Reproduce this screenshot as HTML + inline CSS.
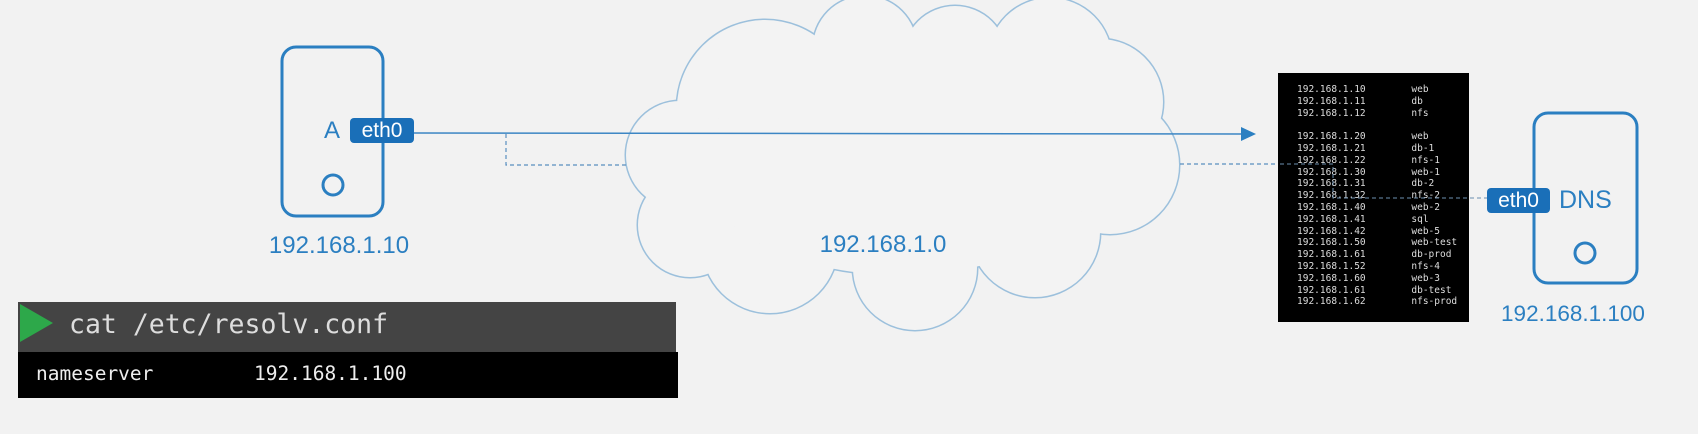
<!DOCTYPE html>
<html><head><meta charset="utf-8"><style>
html,body{margin:0;padding:0;background:#f2f2f2;}
body{width:1698px;height:434px;position:relative;overflow:hidden;font-family:"Liberation Sans",sans-serif;}
.mono{font-family:"DejaVu Sans Mono","Liberation Mono",monospace;}
</style></head><body>
<svg width="1698" height="434" style="position:absolute;left:0;top:0">
 <defs>
  <g id="cl">
   <circle cx="765" cy="108" r="88"/>
   <circle cx="865" cy="48" r="52"/>
   <circle cx="1050" cy="60" r="62"/>
   <circle cx="1100" cy="102" r="63"/>
   <circle cx="1110" cy="165" r="69"/>
   <circle cx="1035" cy="232" r="65"/>
   <circle cx="915" cy="268" r="62"/>
   <circle cx="770" cy="245" r="68"/>
   <circle cx="690" cy="225" r="52"/>
   <circle cx="680" cy="155" r="54"/>
   <circle cx="955" cy="58" r="52"/>
   <ellipse cx="900" cy="165" rx="200" ry="110"/>
  </g>
 </defs>
 <use href="#cl" fill="none" stroke="#9cc0dc" stroke-width="3"/>
 <use href="#cl" fill="#f3f3f3" stroke="none"/>
 <rect x="282" y="47" width="101" height="169" rx="14" fill="none" stroke="#2b7fc1" stroke-width="3"/>
 <circle cx="333" cy="185" r="10" fill="none" stroke="#2b7fc1" stroke-width="3"/>
 <line x1="414" y1="133" x2="1243" y2="134" stroke="#3c86c4" stroke-width="1.5"/>
 <polygon points="1241,127 1256,134 1241,141" fill="#2b7fc1"/>
 <polyline points="506,134 506,165 626,165" fill="none" stroke="#5a90c0" stroke-width="1.2" stroke-dasharray="4,3"/>
 <line x1="1180" y1="164" x2="1280" y2="164" stroke="#5a90c0" stroke-width="1.2" stroke-dasharray="4,3"/>
 <rect x="1534" y="113" width="103" height="170" rx="14" fill="none" stroke="#2b7fc1" stroke-width="3"/>
 <circle cx="1585" cy="253" r="10" fill="none" stroke="#2b7fc1" stroke-width="3"/>
</svg>
<div class="mono" style="position:absolute;left:1278px;top:73px;width:191px;height:249px;background:#000;color:#ddd;font-size:9.5px;line-height:11.8px;">
<pre style="margin:0;position:absolute;left:19px;top:11px;font:inherit;">192.168.1.10        web
192.168.1.11        db
192.168.1.12        nfs

192.168.1.20        web
192.168.1.21        db-1
192.168.1.22        nfs-1
192.168.1.30        web-1
192.168.1.31        db-2
192.168.1.32        nfs-2
192.168.1.40        web-2
192.168.1.41        sql
192.168.1.42        web-5
192.168.1.50        web-test
192.168.1.61        db-prod
192.168.1.52        nfs-4
192.168.1.60        web-3
192.168.1.61        db-test
192.168.1.62        nfs-prod</pre>
</div>
<svg width="1698" height="434" style="position:absolute;left:0;top:0">
 <polyline points="1280,164 1333,164 1333,198 1487,198" fill="none" stroke="#6b8fb0" stroke-width="1" stroke-dasharray="4,3"/>
</svg>
<div style="position:absolute;left:324px;top:118px;font-size:24px;color:#2b7fc1;line-height:26px;">A</div>
<div style="position:absolute;left:350px;top:118px;width:64px;height:25px;background:#1a6fb8;border-radius:4px;color:#fff;font-size:21px;line-height:25px;text-align:center;">eth0</div>
<div style="position:absolute;left:1487px;top:188px;width:63px;height:25px;background:#1a6fb8;border-radius:4px;color:#fff;font-size:21px;line-height:25px;text-align:center;">eth0</div>
<div style="position:absolute;left:1559px;top:186px;font-size:25px;color:#2b7fc1;line-height:28px;">DNS</div>
<div style="position:absolute;left:239px;top:232px;width:200px;text-align:center;font-size:24px;color:#2b7fc1;line-height:28px;">192.168.1.10</div>
<div style="position:absolute;left:783px;top:231px;width:200px;text-align:center;font-size:24px;color:#2b7fc1;line-height:28px;">192.168.1.0</div>
<div style="position:absolute;left:1473px;top:300px;width:200px;text-align:center;font-size:22.5px;color:#2b7fc1;line-height:28px;">192.168.1.100</div>
<div style="position:absolute;left:18px;top:302px;width:658px;height:50px;background:#444;"></div>
<svg width="40" height="40" style="position:absolute;left:20px;top:304px"><polygon points="0,0 33,19 0,38" fill="#2da84a"/></svg>
<div class="mono" style="position:absolute;left:69px;top:309px;font-size:26.5px;color:#ddd;line-height:32px;">cat /etc/resolv.conf</div>
<div style="position:absolute;left:18px;top:352px;width:660px;height:46px;background:#000;"></div>
<div class="mono" style="position:absolute;left:36px;top:362px;font-size:19.5px;color:#eee;line-height:24px;">nameserver</div>
<div class="mono" style="position:absolute;left:254px;top:362px;font-size:19.5px;color:#eee;line-height:24px;">192.168.1.100</div>
</body></html>
